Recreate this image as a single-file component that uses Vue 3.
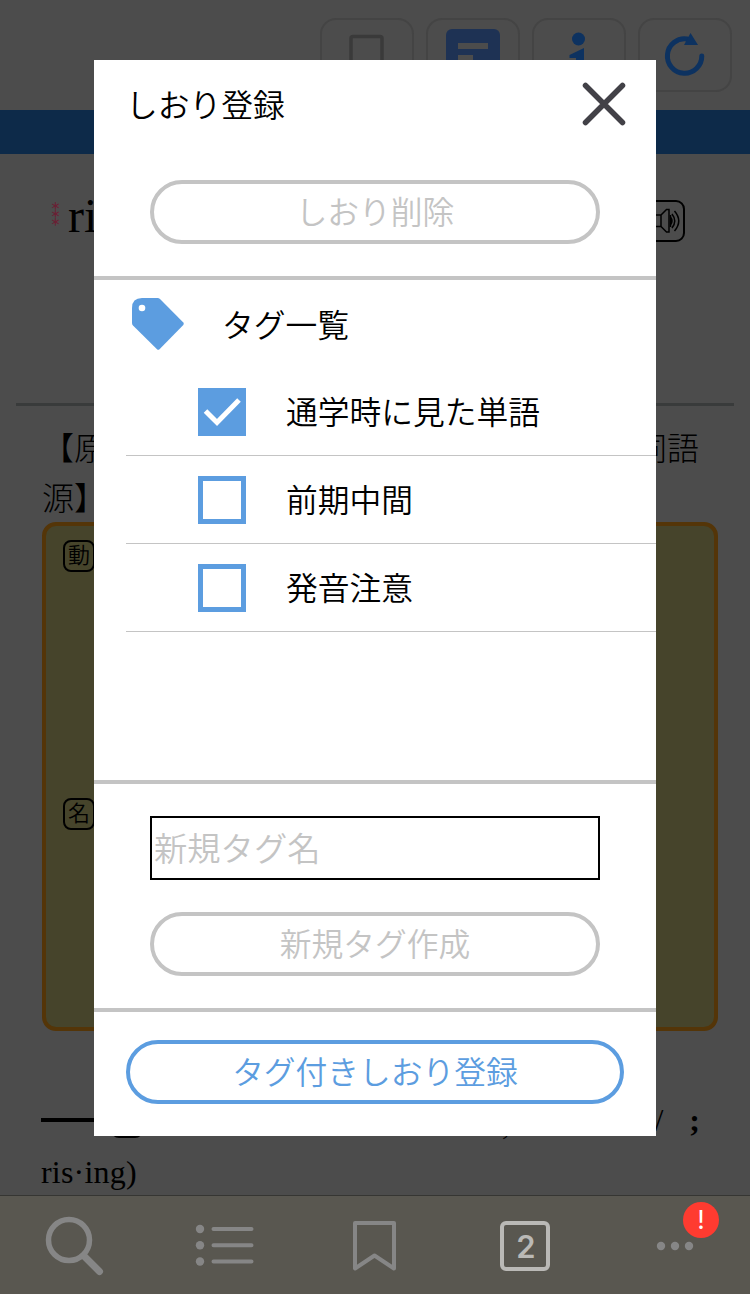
<script setup>
import { ref } from "vue";

const tags = ref([
  { name: "通学時に見た単語", checked: true },
  { name: "前期中間", checked: false },
  { name: "発音注意", checked: false },
]);

const newTag = ref("");
</script>

<template>
  <div class="app">
    <header class="toolbar">
      <div class="tool">
        <svg width="54" height="54" viewBox="0 0 54 54" fill="none">
          <path d="M11 48V9.500a2 2 0 0 1 2-2H40a2 2 0 0 1 2 2V48L27 38Z" stroke="#3a3a3a" stroke-width="3.500" />
        </svg>
      </div>
      <div class="tool">
        <svg width="54" height="54" viewBox="0 0 54 54">
          <rect width="54" height="54" rx="6" fill="#1e3254" />
          <path d="M12 14H42V20H12ZM12 26H27V32H12ZM12 38H42V44H12Z" fill="#4c4c4c" />
        </svg>
      </div>
      <div class="tool">
        <svg width="54" height="54" viewBox="0 0 54 54" fill="#0d3260">
          <circle cx="26.500" cy="10" r="6.500" />
          <path d="M17.500 26L32 19V44H37V48H19V44H24V29H17.500Z" />
        </svg>
      </div>
      <div class="tool">
        <svg width="54" height="54" viewBox="0 0 54 54">
          <path d="M29 10A17.200 17.200 0 1 0 43.800 27" fill="none" stroke="#0d3260" stroke-width="5" stroke-linecap="round" />
          <path d="M32.500 4L40 16H26Z" fill="#0d3260" />
        </svg>
      </div>
    </header>
    <div class="band"></div>

    <main class="entry">
      <div class="headword">
        <span class="stars">＊＊＊</span>
        <h1>ri</h1>
        <svg class="speaker" width="42" height="42" viewBox="0 0 42 42" fill="none" stroke="#000" stroke-width="1.500">
          <rect x="1" y="1" width="40" height="40" rx="8" stroke-width="2" />
          <path d="M9 15H18L23.500 9.500H26V32H23.500L18 26.500H9ZM18 15V26.500" />
          <path d="M27.500 17Q30.500 21 27.500 25M29 14Q34.500 21 29 28M31.500 11Q40 21 31.500 31M27.500 15V27" />
        </svg>
      </div>
      <hr>
      <div class="origin">
        <p><span>【原</span><span>同語</span></p>
        <p>源】</p>
      </div>
      <div class="meanings">
        <span class="pos">動</span>
        <span class="pos">名</span>
      </div>
      <div class="forms">
        <div class="forms-line">
          <i class="dash"></i>
          <i class="pos"></i>
          <span class="comma">,</span>
          <span class="slash">/</span>
          <span class="semi">;</span>
        </div>
        <p>ris·ing)</p>
      </div>
    </main>

    <nav class="tabs">
      <div class="tab">
        <svg width="60" height="60" viewBox="0 0 60 60" fill="none" stroke="#868686">
          <circle cx="24" cy="24" r="20.500" stroke-width="5.500" />
          <path d="M39 40L54.500 55.500" stroke-width="7" stroke-linecap="round" />
        </svg>
      </div>
      <div class="tab">
        <svg width="60" height="60" viewBox="0 0 60 60" fill="#868686">
          <circle cx="5" cy="13" r="4.200" />
          <circle cx="5" cy="29.300" r="4.200" />
          <circle cx="5" cy="45.500" r="4.200" />
          <path d="M18.500 13H56.500M18.500 29.300H56.500M18.500 45.500H56.500" stroke="#868686" stroke-width="4" stroke-linecap="round" />
        </svg>
      </div>
      <div class="tab">
        <svg width="60" height="60" viewBox="0 0 60 60" fill="none">
          <path d="M10 7H49V52.500L29.500 39.500L10 52.500Z" stroke="#868686" stroke-width="4" stroke-linejoin="round" />
        </svg>
      </div>
      <div class="tab"><span class="count">2</span></div>
      <div class="tab">
        <svg width="60" height="60" viewBox="0 0 60 60" fill="#868686">
          <circle cx="16" cy="30" r="4.200" />
          <circle cx="30" cy="30" r="4.200" />
          <circle cx="44" cy="30" r="4.200" />
        </svg>
        <span class="alert">!</span>
      </div>
    </nav>

    <div class="overlay">
      <section class="modal">
        <div class="modal-head">
          <h2>しおり登録</h2>
          <svg class="close" width="44" height="44" viewBox="0 0 44 44">
            <path d="M3.500 3.500L40.500 40.500M40.500 3.500L3.500 40.500" stroke="#424147" stroke-width="5.500" stroke-linecap="round" />
          </svg>
        </div>
        <div class="block">
          <button class="pill">しおり削除</button>
        </div>
        <div class="list">
          <div class="list-head">
            <svg width="54" height="54" viewBox="0 0 54 54">
              <path d="M11 1H26.500Q28 1 29 2L52.300 25.500Q53.300 26.700 52.300 27.900L28.500 52.200Q27.200 53.200 26 52.200L2 28.500Q1 27.500 1 26V11Q1 1 11 1Z" fill="#5c9de0" />
              <circle cx="11" cy="11" r="3.300" fill="#fff" />
            </svg>
            <h3>タグ一覧</h3>
          </div>
          <label v-for="tag in tags" :key="tag.name" class="row">
            <input v-model="tag.checked" type="checkbox">
            <span class="box" :class="{ checked: tag.checked }">
              <svg v-if="tag.checked" width="48" height="48" viewBox="0 0 48 48">
                <path d="M7.500 23L19 34.500L41 12" fill="none" stroke="#fff" stroke-width="5" />
              </svg>
            </span>
            <span class="label">{{ tag.name }}</span>
          </label>
        </div>
        <div class="block create">
          <input v-model="newTag" class="name" placeholder="新規タグ名">
          <button class="pill">新規タグ作成</button>
        </div>
        <div class="foot">
          <button class="pill primary">タグ付きしおり登録</button>
        </div>
      </section>
    </div>
  </div>
</template>

<style>
body {
  margin: 0;
}
</style>

<style scoped>
.app {
  position: relative;
  display: flex;
  flex-direction: column;
  width: 750px;
  height: 1294px;
  overflow: hidden;
  background-color: #4c4c4c;
  color: #000;
  font-family: "Noto Sans CJK JP", sans-serif;
  font-weight: 350;
}

.app * {
  box-sizing: border-box;
}

h1, h2, h3, p {
  margin: 0;
  font-weight: inherit;
}

.toolbar {
  display: flex;
  justify-content: flex-end;
  gap: 12px;
  height: 110px;
  padding: 18px 18px 0 0;
}

.tool {
  display: flex;
  justify-content: center;
  width: 94px;
  height: 74px;
  padding-top: 9px;
  border: 2px solid #444;
  border-radius: 16px;
}

.band {
  height: 44px;
  background-color: #0d2a49;
}

.entry {
  display: flex;
  flex-direction: column;
  height: 1041px;
  font-family: "Liberation Serif", "Noto Sans CJK JP", serif;
  font-weight: 300;
}

.entry > * {
  flex: none;
}

.headword {
  display: flex;
  align-items: flex-start;
  height: 249px;
  padding: 46px 65px 0 51px;
}

.stars {
  width: 17px;
  height: 34px;
  padding-top: 1px;
  color: #6b2034;
  font-family: "Noto Sans CJK JP", sans-serif;
  font-size: 10px;
  font-weight: 900;
  letter-spacing: -2px;
  line-height: 9px;
  writing-mode: vertical-lr;
}

h1 {
  font-size: 48px;
  line-height: 32px;
}

.speaker {
  margin-left: auto;
}

hr {
  width: 718px;
  height: 3px;
  margin: 0 auto;
  border: 0;
  background-color: #393b3b;
}

.origin {
  height: 116px;
  padding: 18px 51px 0 42px;
  font-size: 32px;
  line-height: 50px;
}

.origin p {
  display: flex;
  justify-content: space-between;
}

.meanings {
  display: flex;
  flex-direction: column;
  gap: 226px;
  width: 676px;
  height: 509px;
  margin-left: 42px;
  padding: 14px 17px;
  border: 4px solid #543508;
  border-radius: 14px;
  background-color: #46442b;
}

.pos {
  display: flex;
  flex: none;
  align-items: center;
  justify-content: center;
  width: 32px;
  height: 32px;
  border: 2px solid #000;
  border-radius: 8px;
  font-size: 22px;
  font-weight: 350;
  line-height: 28px;
}

.forms {
  padding: 64px 50px 0 41px;
  font-size: 32px;
  line-height: 54px;
}

.forms p {
  letter-spacing: .2px;
}

.forms-line {
  display: flex;
  align-items: center;
  height: 50px;
}

.dash {
  width: 64px;
  height: 4px;
  background-color: #000;
}

.forms-line .pos {
  margin: 4px 0 0 6px;
}

.comma {
  margin: 6px 0 0 359px;
}

.slash {
  margin: 0 26px 0 auto;
}

.semi {
  font-weight: 700;
}

.tabs {
  display: flex;
  height: 99px;
  padding-top: 2px;
  border-top: 1px solid #363633;
  background-color: #595750;
}

.tab {
  position: relative;
  display: flex;
  align-items: center;
  justify-content: center;
  width: 150px;
}

.count {
  display: flex;
  align-items: center;
  justify-content: center;
  width: 50px;
  height: 50px;
  padding-left: 2px;
  border: 4px solid #bab9b6;
  border-radius: 6px;
  color: #bab9b6;
  font: 600 31px Inter, sans-serif;
}

.alert {
  position: absolute;
  top: 4px;
  left: 83px;
  width: 36px;
  height: 36px;
  border-radius: 50%;
  background-color: #ff3b30;
  color: #fff;
  font: 26px/36px Inter, sans-serif;
  text-align: center;
}

.overlay {
  position: absolute;
  inset: 0;
  display: flex;
  align-items: flex-start;
  justify-content: center;
  padding-top: 60px;
}

.modal {
  display: flex;
  flex-direction: column;
  width: 562px;
  height: 1076px;
  background-color: #fff;
  font-size: 31.75px;
}

.modal-head {
  display: flex;
  align-items: center;
  justify-content: space-between;
  height: 88px;
  padding: 0 30px 0 32px;
}

h2, h3, .label {
  padding-bottom: 3px;
  font-size: 31.75px;
}

.block {
  display: flex;
  flex-direction: column;
  gap: 32px;
  padding: 32px 56px;
  border-bottom: 4px solid #c4c4c4;
}

.create {
  border-top: 4px solid #c4c4c4;
}

.pill {
  width: 100%;
  height: 64px;
  padding: 0 0 4px;
  border: 4px solid #c4c4c4;
  border-radius: 32px;
  background-color: #fff;
  color: #c4c4c4;
  font: inherit;
  line-height: 52px;
}

.pill.primary {
  border-color: #5c9de0;
  color: #5c9de0;
}

.list {
  flex: 1;
}

.list-head {
  display: flex;
  align-items: center;
  gap: 37px;
  height: 88px;
  padding-left: 37px;
}

.row {
  display: flex;
  align-items: center;
  height: 88px;
  margin-left: 32px;
  padding-left: 72px;
  border-bottom: 1px solid #c4c4c4;
}

.row input {
  display: none;
}

.box {
  width: 48px;
  height: 48px;
  margin-right: 40px;
  border: 5px solid #5c9de0;
}

.box.checked {
  border: 0;
  background-color: #5c9de0;
}

.box svg {
  display: block;
}

.name {
  width: 100%;
  height: 64px;
  padding: 0 2px 4px;
  border: 2px solid #000;
  border-radius: 0;
  outline: none;
  font: inherit;
  font-size: 33.3px;
}

.name::placeholder {
  color: #c4c4c4;
}

.foot {
  padding: 28px 32px 32px;
}
</style>
